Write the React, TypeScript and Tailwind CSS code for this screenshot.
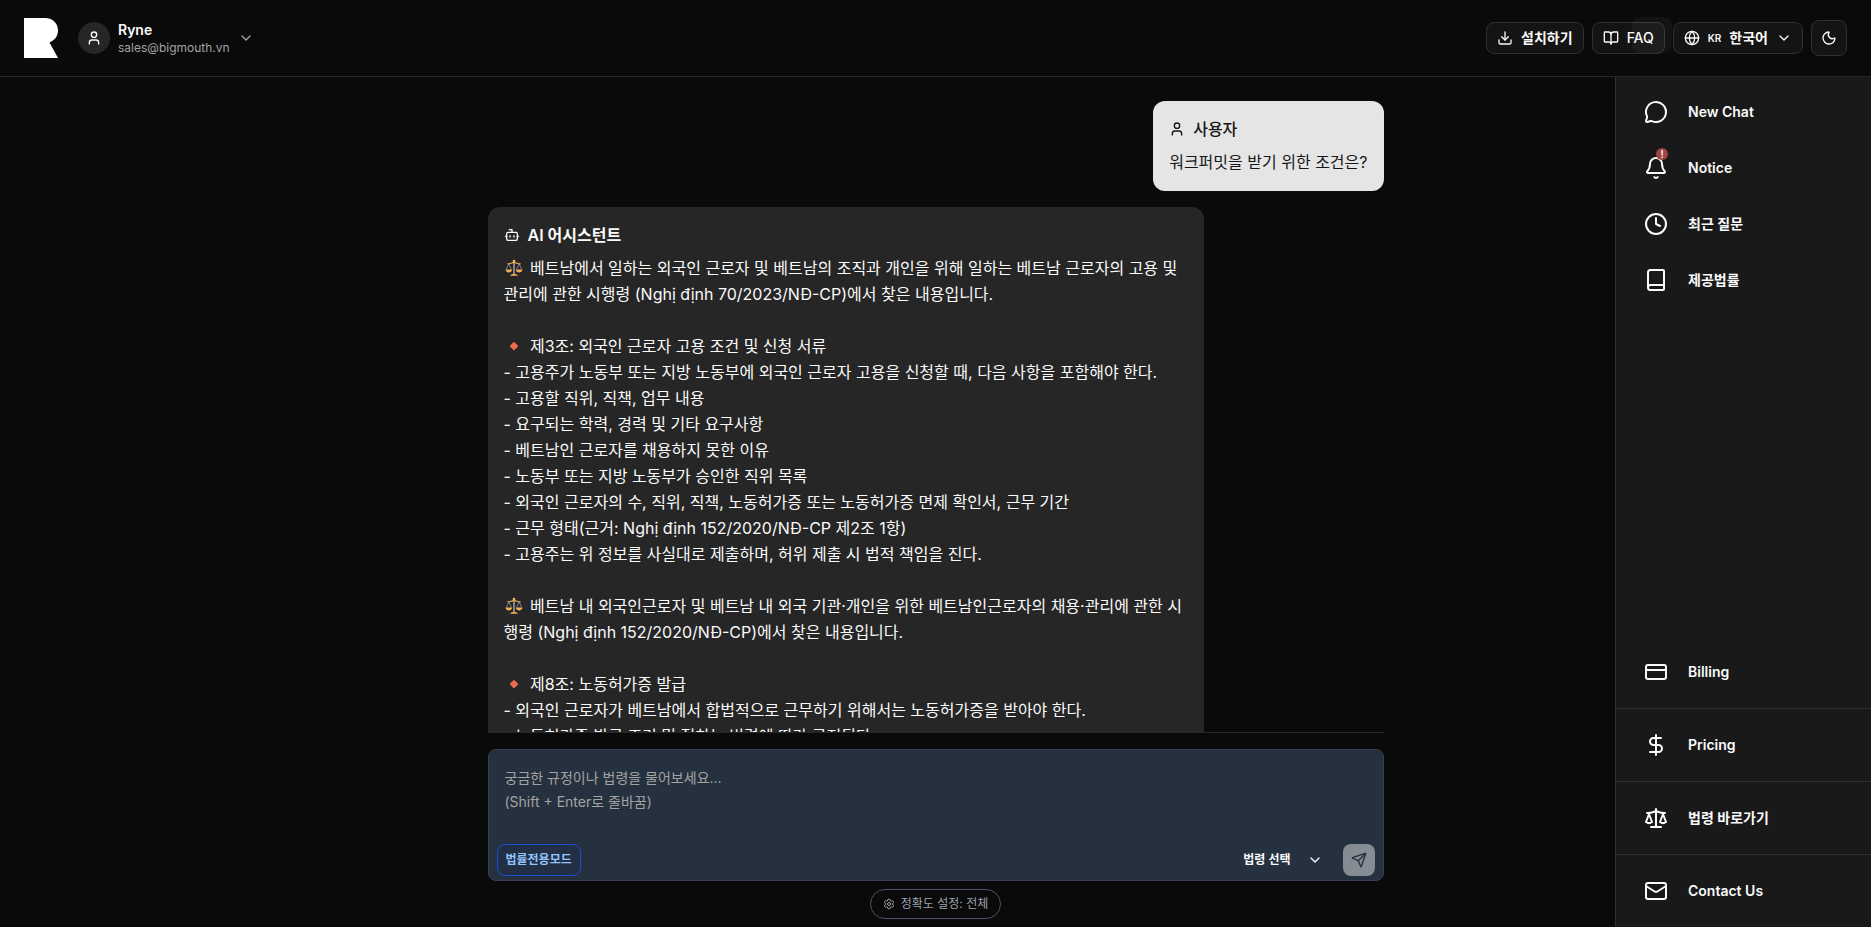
import React from 'react';
import {
  Bell,
  Book,
  BookOpen,
  Bot,
  ChevronDown,
  Clock,
  CreditCard,
  DollarSign,
  Download,
  Globe,
  Mail,
  MessageCircle,
  Moon,
  Scale,
  Send,
  Settings,
  User,
} from 'lucide-react';

const ScaleEmoji = () => (
  <svg viewBox="0 0 20 20" className="inline-block w-5 h-5 mr-0.5 align-[-4px]" role="img" aria-label="저울">
    <path d="M10 2v14" stroke="#b9a9b8" strokeWidth="1.4" />
    <path d="M3.5 5.6c3 1 4.500-1.200 6.500-1.200s3.500 2.200 6.500 1.200" stroke="#e8b04f" strokeWidth="1.200" fill="none" />
    <path d="M4.800 5.800 2.300 11.500M4.800 5.800l2.600 5.700M15.200 5.800l-2.600 5.700M15.200 5.800l2.500 5.700" stroke="#a99bb0" strokeWidth=".7" />
    <path d="M1.500 11.400h6.700c-.4 2-1.700 3-3.400 3s-3-1-3.300-3zM11.800 11.400h6.700c-.4 2-1.700 3-3.400 3s-3-1-3.300-3z" fill="#f0b14e" />
    <path d="M6 17.800c.3-1.300 2-1.800 4-1.800s3.700.5 4 1.800z" fill="#f0b14e" />
    <circle cx="10" cy="3" r="1.300" fill="#f3bd5c" />
  </svg>
);

const DiamondEmoji = () => (
  <svg viewBox="0 0 20 20" className="inline-block w-5 h-5 mr-0.5 align-[-4px]" role="img" aria-label="항목">
    <rect x="7" y="7" width="6.200" height="6.200" rx=".8" transform="rotate(45 10 10)" fill="#ee6a4c" />
  </svg>
);

type Line = { icon?: 'scale' | 'diamond'; text: string };

const answer: Line[] = [
  {
    icon: 'scale',
    text: '베트남에서 일하는 외국인 근로자 및 베트남의 조직과 개인을 위해 일하는 베트남 근로자의 고용 및 관리에 관한 시행령 (Nghị định 70/2023/NĐ-CP)에서 찾은 내용입니다.',
  },
  { text: '' },
  { icon: 'diamond', text: '제3조: 외국인 근로자 고용 조건 및 신청 서류' },
  { text: '- 고용주가 노동부 또는 지방 노동부에 외국인 근로자 고용을 신청할 때, 다음 사항을 포함해야 한다.' },
  { text: '- 고용할 직위, 직책, 업무 내용' },
  { text: '- 요구되는 학력, 경력 및 기타 요구사항' },
  { text: '- 베트남인 근로자를 채용하지 못한 이유' },
  { text: '- 노동부 또는 지방 노동부가 승인한 직위 목록' },
  { text: '- 외국인 근로자의 수, 직위, 직책, 노동허가증 또는 노동허가증 면제 확인서, 근무 기간' },
  { text: '- 근무 형태(근거: Nghị định 152/2020/NĐ-CP 제2조 1항)' },
  { text: '- 고용주는 위 정보를 사실대로 제출하며, 허위 제출 시 법적 책임을 진다.' },
  { text: '' },
  {
    icon: 'scale',
    text: '베트남 내 외국인근로자 및 베트남 내 외국 기관·개인을 위한 베트남인근로자의 채용·관리에 관한 시행령 (Nghị định 152/2020/NĐ-CP)에서 찾은 내용입니다.',
  },
  { text: '' },
  { icon: 'diamond', text: '제8조: 노동허가증 발급' },
  { text: '- 외국인 근로자가 베트남에서 합법적으로 근무하기 위해서는 노동허가증을 받아야 한다.' },
  { text: '- 노동허가증 발급 조건 및 절차는 법령에 따라 규정된다.' },
];

const topMenu = [
  { icon: MessageCircle, label: 'New Chat' },
  { icon: Bell, label: 'Notice', badge: true },
  { icon: Clock, label: '최근 질문' },
  { icon: Book, label: '제공법률' },
];

const bottomMenu = [
  { icon: CreditCard, label: 'Billing' },
  { icon: DollarSign, label: 'Pricing' },
  { icon: Scale, label: '법령 바로가기' },
  { icon: Mail, label: 'Contact Us' },
];

const headerButton =
  'relative flex items-center h-8 rounded-lg border border-[#303030] bg-[#141414] text-sm font-semibold';

const Header: React.FC = () => (
  <header className="flex items-center justify-between h-[77px] shrink-0 border-b border-[#262626] px-6">
    <div className="flex items-center gap-5">
      <a href="#" aria-label="Home">
        <svg viewBox="0 0 34 40" className="w-[34px] h-10" fill="#fff">
          <path d="M0 0h21c8 0 13 5.500 13 12.500 0 5.500-3 9.500-8.500 12L34 40H0z" />
        </svg>
      </a>
      <button type="button" className="flex items-center text-left">
        <span className="flex items-center justify-center w-8 h-8 rounded-full bg-[#262626]">
          <User className="w-4 h-4" />
        </span>
        <span className="ml-2 pt-0.5 flex flex-col">
          <span className="text-sm leading-[18px] font-semibold">Ryne</span>
          <span className="text-xs leading-[18px] text-[#a3a3a3]">sales@bigmouth.vn</span>
        </span>
        <ChevronDown className="ml-2 w-4 h-4 text-[#a3a3a3]" />
      </button>
    </div>

    <div className="flex items-center gap-2">
      <button type="button" className={`${headerButton} gap-2 px-[10px]`}>
        <Download className="w-4 h-4" />
        설치하기
      </button>
      <button type="button" className={`${headerButton} gap-2 px-[10px]`}>
        <BookOpen className="w-4 h-4" />
        <span className="font-medium">FAQ</span>
        {/* hover glow */}
        <span className="absolute -top-1.5 -right-2 w-10 h-9 rounded-lg bg-white/4" />
      </button>
      <button type="button" className={`${headerButton} gap-2 px-[10px]`}>
        <Globe className="w-4 h-4" />
        <span className="text-[10px]">KR</span>
        한국어
        <ChevronDown className="w-4 h-4" />
      </button>
      <button
        type="button"
        aria-label="Theme"
        className="flex items-center justify-center w-9 h-9 rounded-lg border border-[#303030] bg-[#141414]"
      >
        <Moon className="w-4 h-4" />
      </button>
    </div>
  </header>
);

const Sidebar: React.FC = () => (
  <aside className="flex flex-col justify-between w-64 shrink-0 border-l border-[#303030] bg-[#191919]">
    <nav className="pt-[7px] flex flex-col">
      {topMenu.map(({ icon: Icon, label, badge }) => (
        <button key={label} type="button" className="flex items-center gap-5 h-14 pl-7 text-sm font-semibold">
          <span className="relative">
            <Icon className="w-6 h-6" />
            {badge && (
              <span className="absolute -top-2 right-0 flex items-center justify-center w-3 h-3 rounded-full bg-[#a24444] text-[10px] leading-none">
                !
              </span>
            )}
          </span>
          {label}
        </button>
      ))}
    </nav>
    <nav className="flex flex-col divide-y divide-[#303030]">
      {bottomMenu.map(({ icon: Icon, label }) => (
        <a key={label} href="#" className="box-content flex items-center gap-5 h-[72px] pl-7 text-sm font-semibold">
          <Icon className="w-6 h-6" />
          {label}
        </a>
      ))}
    </nav>
  </aside>
);

const Messages: React.FC = () => (
  <div className="flex-1 min-h-0 overflow-hidden border-b border-[#262626] pt-6 flex flex-col gap-4">
    <div className="self-end shrink-0 rounded-xl bg-[#e5e5e5] text-[#171717] p-4">
      <div className="flex items-center gap-2 mb-2 font-medium leading-6">
        <User className="w-4 h-4" />
        사용자
      </div>
      <p className="leading-[26px]">워크퍼밋을 받기 위한 조건은?</p>
    </div>

    <div className="self-start shrink-0 w-4/5 rounded-xl bg-[#262626] p-4">
      <div className="flex items-center gap-2 mb-2 font-semibold leading-6">
        <Bot className="w-4 h-4" />
        AI 어시스턴트
      </div>
      <div className="leading-[26px] break-all">
        {answer.map((line, i) => (
          <p key={i} className="min-h-[26px]">
            {line.icon === 'scale' && <ScaleEmoji />}
            {line.icon === 'diamond' && <DiamondEmoji />}
            {line.icon && ' '}
            {line.text}
          </p>
        ))}
      </div>
    </div>
  </div>
);

const Composer: React.FC = () => {
  const [message, setMessage] = React.useState('');

  return (
    <form
      onSubmit={(e) => e.preventDefault()}
      className="mt-4 flex flex-col rounded-lg border border-[#374151] bg-[#26313f]"
    >
      <textarea
        aria-label="질문"
        value={message}
        onChange={(e) => setMessage(e.target.value)}
        placeholder={'궁금한 규정이나 법령을 물어보세요...\n(Shift + Enter로 줄바꿈)'}
        className="h-[94px] resize-none bg-transparent px-4 pt-4 text-sm leading-6 outline-none placeholder:text-[#a3a3a3]"
      />
      <div className="flex items-center justify-between px-2 pb-1">
        <button
          type="button"
          className="h-8 rounded-lg border border-[#1d4ed8] bg-[#222f45] px-2 text-xs font-semibold text-[#93c5fd]"
        >
          법률전용모드
        </button>
        <div className="flex items-center gap-5">
          <button type="button" className="flex items-center gap-4 text-xs font-semibold">
            법령 선택
            <ChevronDown className="w-4 h-4" />
          </button>
          <button
            type="submit"
            aria-label="보내기"
            className="flex items-center justify-center w-8 h-8 rounded-lg bg-[#868c94] text-[#262f3b]"
          >
            <Send className="w-4 h-4" />
          </button>
        </div>
      </div>
    </form>
  );
};

export default function App() {
  return (
    <div
      lang="ko"
      className="flex flex-col h-screen overflow-hidden bg-[#0a0a0a] text-[#fafafa] font-['Inter','Noto_Sans_CJK_KR',sans-serif]"
    >
      <Header />
      <div className="flex flex-1 min-h-0">
        <main className="flex-1 min-w-0 flex pl-64">
          <div className="w-full max-w-4xl mx-auto flex flex-col min-h-0">
            <Messages />
            <Composer />
            <button
              type="button"
              className="self-center my-2 flex items-center gap-1.5 h-[30px] rounded-full border border-[#4b5563] px-3 text-xs text-[#9ca3af]"
            >
              <Settings className="w-3 h-3" />
              정확도 설정: 전체
            </button>
          </div>
        </main>
        <Sidebar />
      </div>
    </div>
  );
}
